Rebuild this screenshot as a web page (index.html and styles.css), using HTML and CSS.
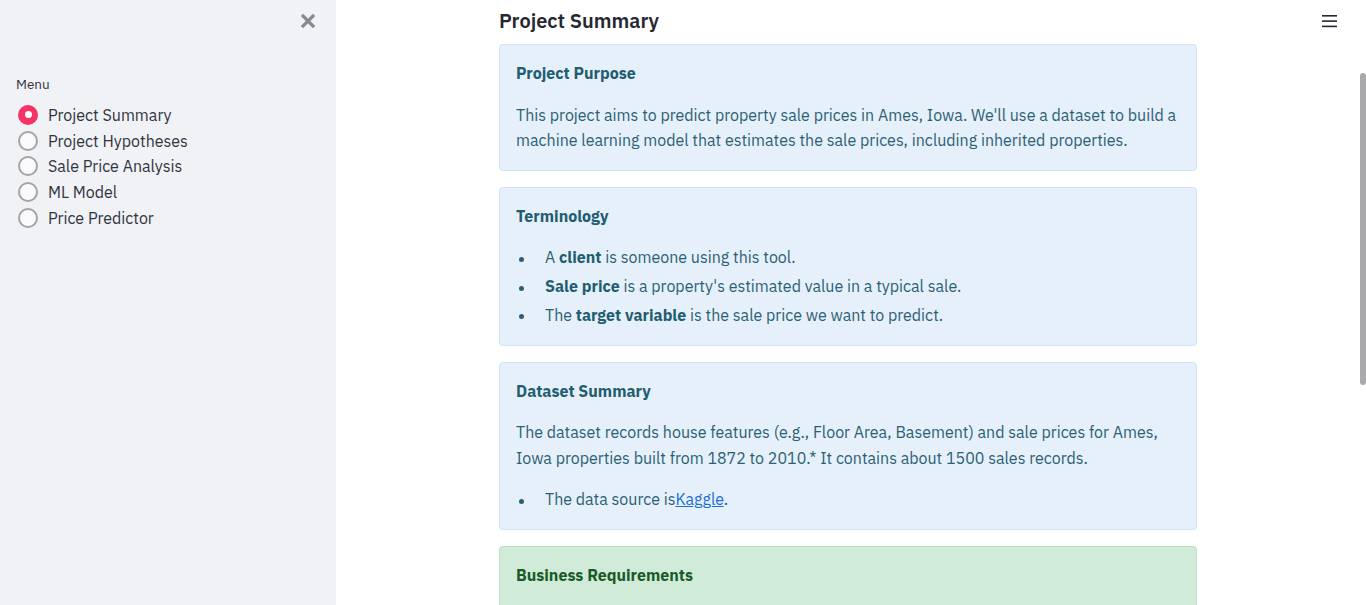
FILE: index.html
```html
<!DOCTYPE html>
<html lang="en">
<head>
<meta charset="utf-8">
<title>Project Summary</title>
<link rel="stylesheet" href="styles.css">
</head>
<body>
<div class="app">
  <aside class="sidebar">
    <div class="sb-top">
      <button class="close-btn" aria-label="Close sidebar">
        <svg width="14" height="14" viewBox="0 0 14 14"><path d="M2 2 L12 12 M12 2 L2 12" stroke="#8a8a8e" stroke-width="3.2" stroke-linecap="square" fill="none"/></svg>
      </button>
    </div>
    <div class="menu-label">Menu</div>
    <div class="radios">
      <label class="radio selected"><span class="dot"></span><span>Project Summary</span></label>
      <label class="radio"><span class="dot"></span><span>Project Hypotheses</span></label>
      <label class="radio"><span class="dot"></span><span>Sale Price Analysis</span></label>
      <label class="radio"><span class="dot"></span><span>ML Model</span></label>
      <label class="radio"><span class="dot"></span><span>Price Predictor</span></label>
    </div>
  </aside>
  <main class="main">
    <div class="content">
      <div class="block">
        <h2 class="title">Project Summary</h2>
        <div class="alert info">
          <p class="alert-head">Project Purpose</p>
          <p>This project aims to predict property sale prices in Ames, Iowa. We'll use a dataset to build a machine learning model that estimates the sale prices, including inherited properties.</p>
        </div>
        <div class="alert info">
          <p class="alert-head">Terminology</p>
          <ul>
            <li>A <b>client</b> is someone using this tool.</li>
            <li><b>Sale price</b> is a property's estimated value in a typical sale.</li>
            <li>The <b>target variable</b> is the sale price we want to predict.</li>
          </ul>
        </div>
        <div class="alert info">
          <p class="alert-head">Dataset Summary</p>
          <p>The dataset records house features (e.g., Floor Area, Basement) and sale prices for Ames, Iowa properties built from 1872 to 2010.* It contains about 1500 sales records.</p>
          <ul>
            <li>The data source is<a href="#">Kaggle</a>.</li>
          </ul>
        </div>
        <div class="alert success">
          <p class="alert-head">Business Requirements</p>
          <p>The client has inherited four houses in Ames, Iowa, and wants to maximise the sales price for them. She also wants to be able to estimate the price of any other house in the area.</p>
        </div>
      </div>
    </div>
    <div class="scrollbar"><div class="thumb"></div></div>
  </main>
  <button class="menu-btn" aria-label="Main menu">
    <svg width="15" height="14" viewBox="0 0 15 14"><rect x="0" y="1" width="15" height="1.6" fill="#262730"/><rect x="0" y="6.3" width="15" height="1.6" fill="#262730"/><rect x="0" y="11.6" width="15" height="1.6" fill="#262730"/></svg>
  </button>
</div>
</body>
</html>
```
FILE: styles.css
```css
* { box-sizing: border-box; }
html, body { margin: 0; padding: 0; height: 100%; }
body {
  font-family: "IBM Plex Sans", "Liberation Sans", Arial, sans-serif;
  color: #262730;
  background: #ffffff;
  overflow: hidden;
}
.app {
  position: relative;
  display: flex;
  height: 605px;
}
.sidebar {
  width: 336px;
  flex: 0 0 336px;
  background: #f0f2f6;
  padding: 0 16px;
}
.sb-top {
  height: 42px;
  display: flex;
  align-items: center;
  justify-content: flex-end;
  padding-right: 5px;
}
.close-btn {
  border: 0;
  background: none;
  padding: 0;
  width: 14px;
  height: 14px;
  display: flex;
}
.menu-label {
  margin-top: 31px;
  font-size: 13.5px;
  line-height: 22px;
  color: #31333f;
}
.radios {
  margin-top: 7px;
  display: flex;
  flex-direction: column;
}
.radio {
  display: flex;
  align-items: center;
  gap: 10px;
  height: 25.7px;
  font-size: 16px;
  color: #31333f;
  padding-left: 2px;
}
.dot {
  width: 20px;
  height: 20px;
  border-radius: 50%;
  border: 2px solid #a4a4a8;
  background: #fafafa;
  flex: 0 0 20px;
  display: flex;
  align-items: center;
  justify-content: center;
}
.radio.selected .dot {
  border-color: #f63366;
  background: #f63366;
}
.radio.selected .dot::after {
  content: "";
  width: 7px;
  height: 7px;
  border-radius: 50%;
  background: #ffffff;
}
.main {
  flex: 1;
  height: 605px;
  display: flex;
  overflow: hidden;
}
.content {
  flex: 1;
  min-width: 0;
  overflow: hidden;
}
.scrollbar {
  width: 6px;
  flex: 0 0 6px;
  padding-top: 73px;
}
.thumb {
  height: 312px;
  background: #a9a9ac;
  border-radius: 3px;
}
.block {
  max-width: 730px;
  margin: 0 auto;
  padding: 9px 16px 160px;
  display: flex;
  flex-direction: column;
  gap: 16px;
}
.title {
  margin: 0 0 -5px;
  font-size: 20px;
  font-weight: 600;
  line-height: 24px;
  color: #262730;
}
.alert {
  border-radius: 4px;
  padding: 16px;
  font-size: 16px;
  line-height: 25.6px;
}
.alert.info {
  background: #e6f0fb;
  border: 1px solid #d0e3f6;
  color: #2b6074;
}
.alert.success {
  background: #d0ecd8;
  border: 1px solid #b6e0c2;
  color: #1d5f2c;
}
.alert p { margin: 0 0 16px; }
.alert p:last-child { margin-bottom: 0; }
.alert-head {
  font-weight: 700;
  font-size: 16px;
}
.alert.info .alert-head { color: #1f5d70; }
.alert.success .alert-head { color: #1a5a28; }
.alert b { font-weight: 700; color: #1f5d70; }
.alert ul {
  list-style: none;
  margin: 0;
  padding: 0 0 0 29px;
}
.alert li { margin: 0 0 3.2px; }
.alert li:last-child { margin-bottom: 0; }
.alert li::before {
  content: "";
  display: inline-block;
  width: 5px;
  height: 5px;
  border-radius: 50%;
  background: currentColor;
  margin-left: -26.5px;
  margin-right: 21.5px;
  vertical-align: middle;
}
.alert a {
  color: #1a6fd8;
  text-decoration: underline;
}
.menu-btn {
  position: absolute;
  top: 14px;
  right: 29px;
  border: 0;
  background: none;
  padding: 0;
  display: flex;
}
```
